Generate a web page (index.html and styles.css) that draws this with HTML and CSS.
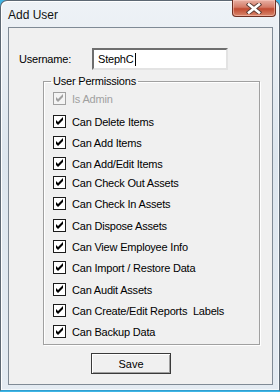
FILE: index.html
```html
<!DOCTYPE html>
<html lang="en">

<head>
    <meta charset="UTF-8">
    <title>Add User</title>
    <link rel="stylesheet" href="styles.css">
</head>

<body>
    <div class="window">
        <div class="titlebar">
            <span class="title">Add User</span>
            <div class="close-btn">
                <svg width="16" height="11" viewBox="0 0 16 11">
                    <path d="M3 1.5 L13 9.5 M13 1.5 L3 9.5" stroke="#5a3a33" stroke-width="4.4" stroke-linecap="square"/>
                    <path d="M3 1.5 L13 9.5 M13 1.5 L3 9.5" stroke="#ffffff" stroke-width="2.6" stroke-linecap="square"/>
                </svg>
            </div>
        </div>

        <div class="client">
            <div class="user-row">
                <label class="user-label">Username:</label>
                <div class="textbox">StephC<span class="caret"></span></div>
            </div>

            <fieldset class="perms">
                <legend>User Permissions</legend>
                <div class="row disabled"><span class="check"></span>Is Admin</div>
                <div class="row gap2"><span class="check"></span>Can Delete Items</div>
                <div class="row"><span class="check"></span>Can Add Items</div>
                <div class="row"><span class="check"></span>Can Add/Edit Items</div>
                <div class="row tight"><span class="check"></span>Can Check Out Assets</div>
                <div class="row"><span class="check"></span>Can Check In Assets</div>
                <div class="row gap1"><span class="check"></span>Can Dispose Assets</div>
                <div class="row"><span class="check"></span>Can View Employee Info</div>
                <div class="row"><span class="check"></span>Can Import / Restore Data</div>
                <div class="row gap1"><span class="check"></span>Can Audit Assets</div>
                <div class="row"><span class="check"></span>Can Create/Edit Reports&nbsp; Labels</div>
                <div class="row"><span class="check"></span>Can Backup Data</div>
            </fieldset>

            <button class="save-btn">Save</button>
        </div>
    </div>
</body>

</html>
```

FILE: styles.css
```css
body {
    margin: 0;
    padding: 0;
    width: 280px;
    height: 392px;
    overflow: hidden;
    background: #3fb6e6;
    font-family: "Liberation Sans", Arial, sans-serif;
    font-size: 11px;
    letter-spacing: -0.2px;
    color: #000;
}

.window {
    width: 278px;
    height: 389px;
    border: 1px solid #5d6873;
    border-bottom-color: #2f9fd0;
    border-radius: 7px 7px 0 0;
    background: linear-gradient(to bottom, #eef2f6 0%, #dde6ee 40%, #e4ebf2 100%);
    box-shadow: inset 1px 1px 0 #ffffff, inset -1px -1px 0 #f4f8fb;
}

.titlebar {
    height: 26px;
    display: flex;
    justify-content: space-between;
    align-items: flex-start;
}

.title {
    margin: 7px 0 0 7px;
    font-size: 12px;
    letter-spacing: 0;
    color: #111;
}

.close-btn {
    width: 42px;
    height: 16px;
    margin-right: 3px;
    margin-top: -1px;
    border: 1px solid #6d2f22;
    border-top: none;
    border-radius: 0 0 4px 4px;
    background: linear-gradient(to bottom, #e8b0a4 0%, #d47a66 45%, #c14a31 55%, #d8876c 100%);
    box-shadow: inset 0 0 0 1px rgba(255, 210, 200, 0.5);
    display: flex;
    justify-content: center;
    align-items: center;
}

.client {
    height: 356px;
    margin: 0 6px 0 7px;
    border: 1px solid #7f8a95;
    background: #f0f0f0;
}

.user-row {
    display: flex;
    align-items: center;
    margin-top: 20px;
    padding-left: 10px;
}

.user-label {
    width: 73px;
}

.textbox {
    width: 128px;
    height: 18px;
    padding: 0 0 0 4px;
    border: 2px solid;
    border-color: #6e6e6e #e3e3e3 #e3e3e3 #6e6e6e;
    background: #fff;
    display: flex;
    align-items: center;
    font-size: 11px;
}

.caret {
    width: 1px;
    height: 13px;
    margin-left: 1px;
    background: #000;
}

.perms {
    width: 217px;
    margin: 5px 0 0 34px;
    padding: 0 0 2px 9px;
    border: 1px solid #a0a0a0;
    box-shadow: 1px 1px 0 #fff, inset 1px 1px 0 #fff;
    box-sizing: border-box;
}

.perms legend {
    padding: 0 2px;
    margin-left: -2px;
    line-height: 13px;
}

.row {
    height: 21px;
    display: flex;
    align-items: center;
}

.row.gap2 { margin-top: 2px; }
.row.gap1 { margin-top: 1px; }
.row.tight { margin-top: -2px; }

.check {
    width: 11px;
    height: 11px;
    margin-right: 6px;
    border: 1px solid #1c1c1c;
    background: #fff url("data:image/svg+xml;utf8,<svg xmlns='http://www.w3.org/2000/svg' width='11' height='11'><path d='M2 4 L2 7 L4 9 L9 4 L9 1 L4 6 Z' fill='black'/></svg>") no-repeat;
}

.row.disabled {
    color: #a0a0a0;
}

.row.disabled .check {
    border-color: #a0a0a0;
    background: #f4f4f4 url("data:image/svg+xml;utf8,<svg xmlns='http://www.w3.org/2000/svg' width='11' height='11'><path d='M2 4 L2 7 L4 9 L9 4 L9 1 L4 6 Z' fill='%23a0a0a0'/></svg>") no-repeat;
}

.save-btn {
    display: block;
    width: 80px;
    height: 21px;
    margin: 8px 0 0 82px;
    padding: 0;
    border: 1px solid #3a3a3a;
    background: #f0f0f0;
    box-shadow: inset 1px 1px 0 #fff, inset -1px -1px 0 #a0a0a0;
    font-family: "Liberation Sans", Arial, sans-serif;
    font-size: 11px;
    color: #000;
}
```
